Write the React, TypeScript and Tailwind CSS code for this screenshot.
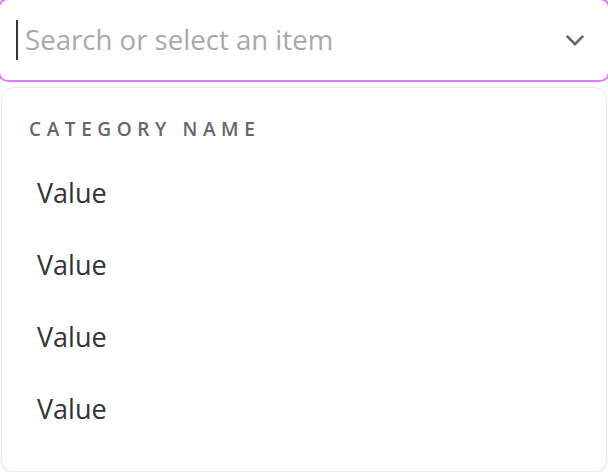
export default function App() {
  const values = ["Value", "Value", "Value", "Value"];

  return (
    <div
      className="w-[608px] h-[472px] overflow-hidden bg-white"
      style={{ fontFamily: "'Open Sans', Lato, sans-serif" }}
    >
      <div className="w-[612px] -ml-[2px] -mt-[2px]">
        <div className="h-[84px] border-2 border-[#d57eff] rounded-[10px] bg-white flex items-center pl-4 pr-[23px]">
          <span className="w-[2px] h-[40px] bg-[#333]" />
          <span className="ml-[7px] flex-1 text-[27.6px] text-[#a9a9a9] leading-none">
            Search or select an item
          </span>
          <svg width="20" height="13" viewBox="0 0 20 13" fill="none">
            <polyline
              points="1.8,1.8 10,10.2 18.2,1.8"
              stroke="#666"
              strokeWidth="2.6"
            />
          </svg>
        </div>
      </div>

      <div className="mx-px mt-[5px] h-[385px] rounded-xl border border-[#ececec] bg-white shadow-[0_1px_3px_rgba(0,0,0,0.06)] pt-[31px]">
        <div className="pl-[27px] text-[19px] leading-[20px] font-semibold tracking-[5.6px] text-[#666]">
          CATEGORY NAME
        </div>
        <ul className="mt-[18px]">
          {values.map((v, i) => (
            <li
              key={i}
              className="h-[72px] flex items-center pl-[35px] text-[27px] text-[#333]"
            >
              {v}
            </li>
          ))}
        </ul>
      </div>
    </div>
  );
}
